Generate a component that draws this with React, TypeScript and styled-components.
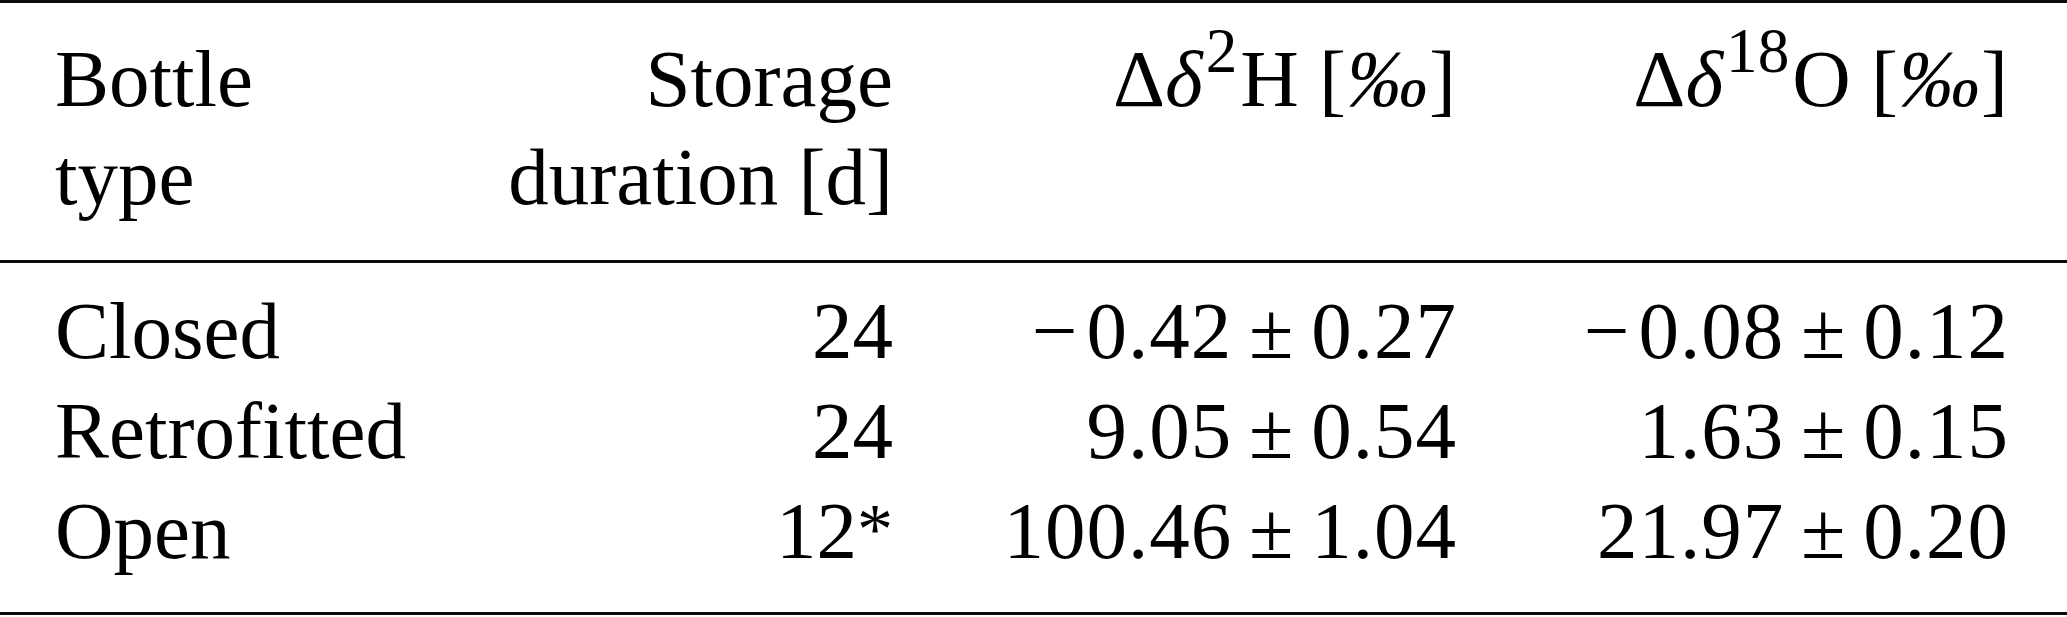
import React from "react";
import styled, { createGlobalStyle } from "styled-components";

const Global = createGlobalStyle`
  html, body { margin: 0; padding: 0; background: #ffffff; }
  body { font-family: "Liberation Serif", "Times New Roman", serif; color: #000; }
`;

const Table = styled.div`
  width: 2067px;
  display: flex;
  flex-direction: column;
  font-family: "Liberation Serif", "Times New Roman", serif;
  font-size: 81px;
  color: #000;
`;

const Rule = styled.div`
  height: 3px;
  background: #0a0a0a;
`;

const Grid = styled.div<{ $pitch: number; $top: number; $bottom: number }>`
  display: grid;
  grid-template-columns: 445px 393px 563px 552px;
  grid-auto-rows: auto;
  line-height: ${(p) => p.$pitch}px;
  padding: ${(p) => p.$top}px 58px ${(p) => p.$bottom}px 55px;
`;

const Cell = styled.div<{ $align: "left" | "right" }>`
  text-align: ${(p) => p.$align};
  white-space: nowrap;
  display: flex;
  flex-direction: column;
  align-items: ${(p) => (p.$align === "left" ? "flex-start" : "flex-end")};
`;

const Line = styled.div<{ $h: number }>`
  height: ${(p) => p.$h}px;
`;

const Sup = styled.sup`
  font-size: 0.78em;
  line-height: 0;
  vertical-align: 34px;
  margin-left: 3px;
  margin-right: 3px;
`;

const Star = styled.sup`
  font-size: 0.89em;
  line-height: 0;
  vertical-align: 5px;
  margin-left: 0;
`;

const Italic = styled.span`
  font-style: italic;
`;

const Num = styled.span`
  letter-spacing: 1px;
  margin-right: -1px;
`;

const Minus = styled.span`
  margin-left: 0.06em;
  margin-right: 0.11em;
`;

const PlusMinus = styled.span`
  margin: 0 0.22em;
`;

const Mil = styled.span`
  font-style: italic;
  margin: 0 1px;
`;

type Row = { type: string; dur: React.ReactNode; h: [string, string]; o: [string, string] };

const rows: Row[] = [
  { type: "Closed", dur: "24", h: ["−0.42", "0.27"], o: ["−0.08", "0.12"] },
  { type: "Retrofitted", dur: "24", h: ["9.05", "0.54"], o: ["1.63", "0.15"] },
  { type: "Open", dur: <>12<Star>*</Star></>, h: ["100.46", "1.04"], o: ["21.97", "0.20"] },
];

function Value({ v }: { v: [string, string] }) {
  const [m, e] = v;
  const neg = m.startsWith("−");
  return (
    <span>
      {neg ? <Minus>−</Minus> : null}
      <Num>{neg ? m.slice(1) : m}</Num>
      <PlusMinus>±</PlusMinus>
      <Num>{e}</Num>
    </span>
  );
}

export default function App() {
  return (
    <>
      <Global />
      <Table>
        <Rule />
        <Grid $pitch={98} $top={27} $bottom={34}>
          <Cell $align="left">
            <Line $h={98}>Bottle</Line>
            <Line $h={98}>type</Line>
          </Cell>
          <Cell $align="right">
            <Line $h={98}>Storage</Line>
            <Line $h={98}>duration [d]</Line>
          </Cell>
          <Cell $align="right">
            <Line $h={98}>
              Δ<Italic>δ</Italic>
              <Sup>2</Sup>H [<Mil>‰</Mil>]
            </Line>
          </Cell>
          <Cell $align="right">
            <Line $h={98}>
              Δ<Italic>δ</Italic>
              <Sup>18</Sup>O [<Mil>‰</Mil>]
            </Line>
          </Cell>
        </Grid>
        <Rule />
        <Grid $pitch={100} $top={18} $bottom={31}>
          {rows.map((r) => (
            <React.Fragment key={r.type}>
              <Cell $align="left">
                <Line $h={100}>{r.type}</Line>
              </Cell>
              <Cell $align="right">
                <Line $h={100}>{r.dur}</Line>
              </Cell>
              <Cell $align="right">
                <Line $h={100}>
                  <Value v={r.h} />
                </Line>
              </Cell>
              <Cell $align="right">
                <Line $h={100}>
                  <Value v={r.o} />
                </Line>
              </Cell>
            </React.Fragment>
          ))}
        </Grid>
        <Rule />
      </Table>
    </>
  );
}
